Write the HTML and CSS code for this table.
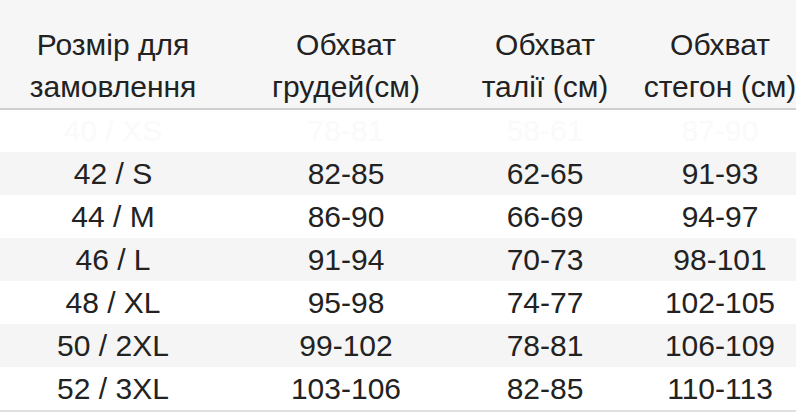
FILE: index.html
```html
<!DOCTYPE html>
<html lang="uk">
<head>
<meta charset="utf-8">
<title>Розмірна сітка</title>
<link rel="stylesheet" href="styles.css">
</head>
<body>
<div class="table">
  <div class="row head">
    <div class="cell">Розмір для<br>замовлення</div>
    <div class="cell">Обхват<br>грудей(см)</div>
    <div class="cell">Обхват<br>талії (см)</div>
    <div class="cell">Обхват<br>стегон (см)</div>
  </div>
  <div class="row ghost">
    <div class="cell">40 / XS</div>
    <div class="cell">78-81</div>
    <div class="cell">58-61</div>
    <div class="cell">87-90</div>
  </div>
  <div class="row alt">
    <div class="cell">42 / S</div>
    <div class="cell">82-85</div>
    <div class="cell">62-65</div>
    <div class="cell">91-93</div>
  </div>
  <div class="row">
    <div class="cell">44 / M</div>
    <div class="cell">86-90</div>
    <div class="cell">66-69</div>
    <div class="cell">94-97</div>
  </div>
  <div class="row alt">
    <div class="cell">46 / L</div>
    <div class="cell">91-94</div>
    <div class="cell">70-73</div>
    <div class="cell">98-101</div>
  </div>
  <div class="row">
    <div class="cell">48 / XL</div>
    <div class="cell">95-98</div>
    <div class="cell">74-77</div>
    <div class="cell">102-105</div>
  </div>
  <div class="row alt">
    <div class="cell">50 / 2XL</div>
    <div class="cell">99-102</div>
    <div class="cell">78-81</div>
    <div class="cell">106-109</div>
  </div>
  <div class="row last">
    <div class="cell">52 / 3XL</div>
    <div class="cell">103-106</div>
    <div class="cell">82-85</div>
    <div class="cell">110-113</div>
  </div>
</div>
</body>
</html>
```
FILE: styles.css
```css
html, body {
  margin: 0;
  padding: 0;
  background: #ffffff;
  overflow: hidden;
}

.table {
  width: 816px;
  font-family: "Liberation Sans", Arial, sans-serif;
  font-size: 30px;
  color: #222222;
}

.row {
  display: grid;
  grid-template-columns: 226px 240px 158px 192px;
  height: 43px;
  line-height: 43px;
  background: #ffffff;
}

.cell {
  text-align: center;
  white-space: nowrap;
}

.head {
  height: 84px;
  line-height: 42px;
  padding-top: 24px;
  background: #f6f6f6;
  border-bottom: 2px solid #cfcfcf;
}

.ghost {
  height: 42px;
  line-height: 42px;
  color: #fafafa;
}

.alt {
  background: #f5f5f5;
}

.last {
  border-bottom: 2px solid #e0e0e0;
}
```
